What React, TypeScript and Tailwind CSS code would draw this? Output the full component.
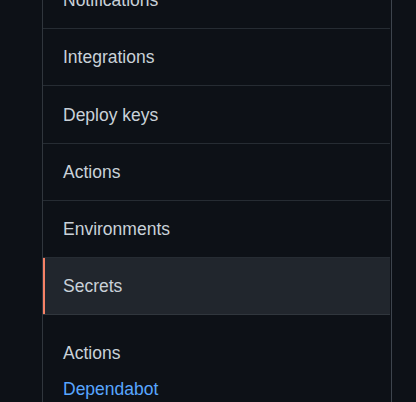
const items = ["Notifications", "Integrations", "Deploy keys", "Actions", "Environments", "Secrets"];

export default function App() {
  return (
    <div className="h-[402px] w-[416px] overflow-hidden bg-[#0d1117] font-['Liberation_Sans',Arial,sans-serif] text-[17.5px] text-[#c9d1d9]">
      <nav className="-mt-[28.25px] ml-[42px] w-[350px] border-x border-l-[#30363d] border-r-[#3d444d]">
        {items.map((item) => {
          const active = item === "Secrets";
          return (
            <div
              key={item}
              className={
                active
                  ? "relative mr-px flex h-[57.25px] items-center border-b border-[#30363d] bg-[#21262d] pl-5 pt-[2px]"
                  : "relative mr-px flex h-[57.25px] items-center border-b border-[#262c33] pl-5 pt-[2px]"
              }
            >
              {active && <span className="absolute inset-y-0 left-0 w-[2px] bg-[#f78166]" />}
              <span className="leading-none">{item}</span>
            </div>
          );
        })}
        <div className="flex flex-col gap-[11px] pl-5 pt-[26px] leading-[25px]">
          <span>Actions</span>
          <a href="#" className="text-[#58a6ff]">
            Dependabot
          </a>
        </div>
      </nav>
    </div>
  );
}
